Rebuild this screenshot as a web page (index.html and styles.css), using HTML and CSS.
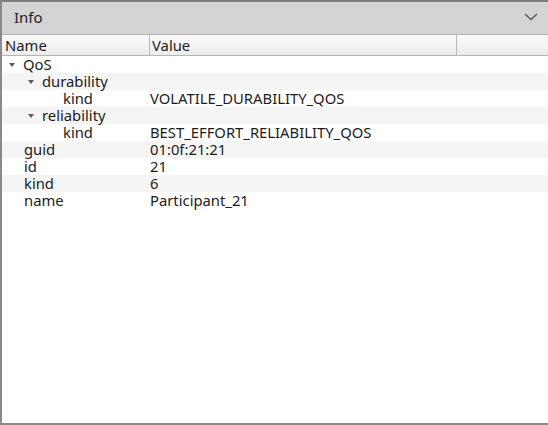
FILE: index.html
```html
<!DOCTYPE html>
<html>
<head>
<meta charset="utf-8">
<link rel="stylesheet" href="styles.css">
</head>
<body>
<div class="window">
  <div class="titlebar">
    <span class="title">Info</span>
    <svg class="chev" width="14" height="8" viewBox="0 0 14 8"><path d="M1 1 L7 6.5 L13 1" fill="none" stroke="#555" stroke-width="1.3"/></svg>
  </div>
  <div class="tree">
    <div class="head">
      <div class="hcell c1">Name</div>
      <div class="hcell c2">Value</div>
      <div class="hcell c3"></div>
    </div>
    <div class="row"><div class="c1 l0"><span class="arrow"></span>QoS</div><div class="c2"></div></div>
    <div class="row alt"><div class="c1 l1"><span class="arrow"></span>durability</div><div class="c2"></div></div>
    <div class="row"><div class="c1 l2">kind</div><div class="c2">VOLATILE_DURABILITY_QOS</div></div>
    <div class="row alt"><div class="c1 l1"><span class="arrow"></span>reliability</div><div class="c2"></div></div>
    <div class="row"><div class="c1 l2">kind</div><div class="c2">BEST_EFFORT_RELIABILITY_QOS</div></div>
    <div class="row alt"><div class="c1 l0">guid</div><div class="c2">01:0f:21:21</div></div>
    <div class="row"><div class="c1 l0">id</div><div class="c2">21</div></div>
    <div class="row alt"><div class="c1 l0">kind</div><div class="c2">6</div></div>
    <div class="row"><div class="c1 l0">name</div><div class="c2">Participant_21</div></div>
  </div>
</div>
</body>
</html>
```
FILE: styles.css
```css
html, body { margin: 0; padding: 0; }
body {
  width: 548px; height: 425px; overflow: hidden;
  font-family: "Noto Sans", "DejaVu Sans", sans-serif;
  font-size: 14.8px; color: #1c1c1c; background: #fff;
}
.window {
  box-sizing: border-box;
  width: 548px; height: 425px;
  border-top: 2px solid #7c7c7c;
  border-left: 2px solid #8a8a8a;
  border-bottom: 2px solid #8a8a8a;
  display: flex; flex-direction: column;
  background: #fff;
}
.titlebar {
  height: 32px; flex: none;
  background: #d4d4d4;
  display: flex; align-items: center; justify-content: space-between;
  padding: 0 10px 0 12px;
  font-size: 15px; color: #1e1e2a;
}
.title { margin-top: -2px; }
.chev { margin-top: -2px; }
.tree { flex: 1; display: flex; flex-direction: column; }
.head {
  display: flex; height: 20px;
  border-top: 1px solid #b4b4b4;
  border-bottom: 1px solid #b4b4b4;
  background: linear-gradient(#fbfbfb, #ececec);
}
.hcell { line-height: 20px; box-sizing: border-box; }
.head .c1 { width: 148px; padding-left: 3px; border-right: 1px solid #b8b8b8; }
.head .c2 { width: 307px; padding-left: 2px; border-right: 1px solid #b8b8b8; }
.head .c3 { flex: 1; }
.row { display: flex; height: 17px; line-height: 17px; }
.row.alt { background: #f5f5f5; }
.row .c1 { width: 148px; box-sizing: border-box; display: flex; align-items: center; }
.row .c2 { padding-left: 0; }
.l0 { padding-left: 22px; }
.l1 { padding-left: 41px; }
.l2 { padding-left: 61px; }
.arrow {
  width: 0; height: 0;
  border-left: 3.5px solid transparent;
  border-right: 3.5px solid transparent;
  border-top: 4px solid #5a5a5a;
  margin-left: -15px; margin-right: 8px; margin-top: 1px;
}
```
